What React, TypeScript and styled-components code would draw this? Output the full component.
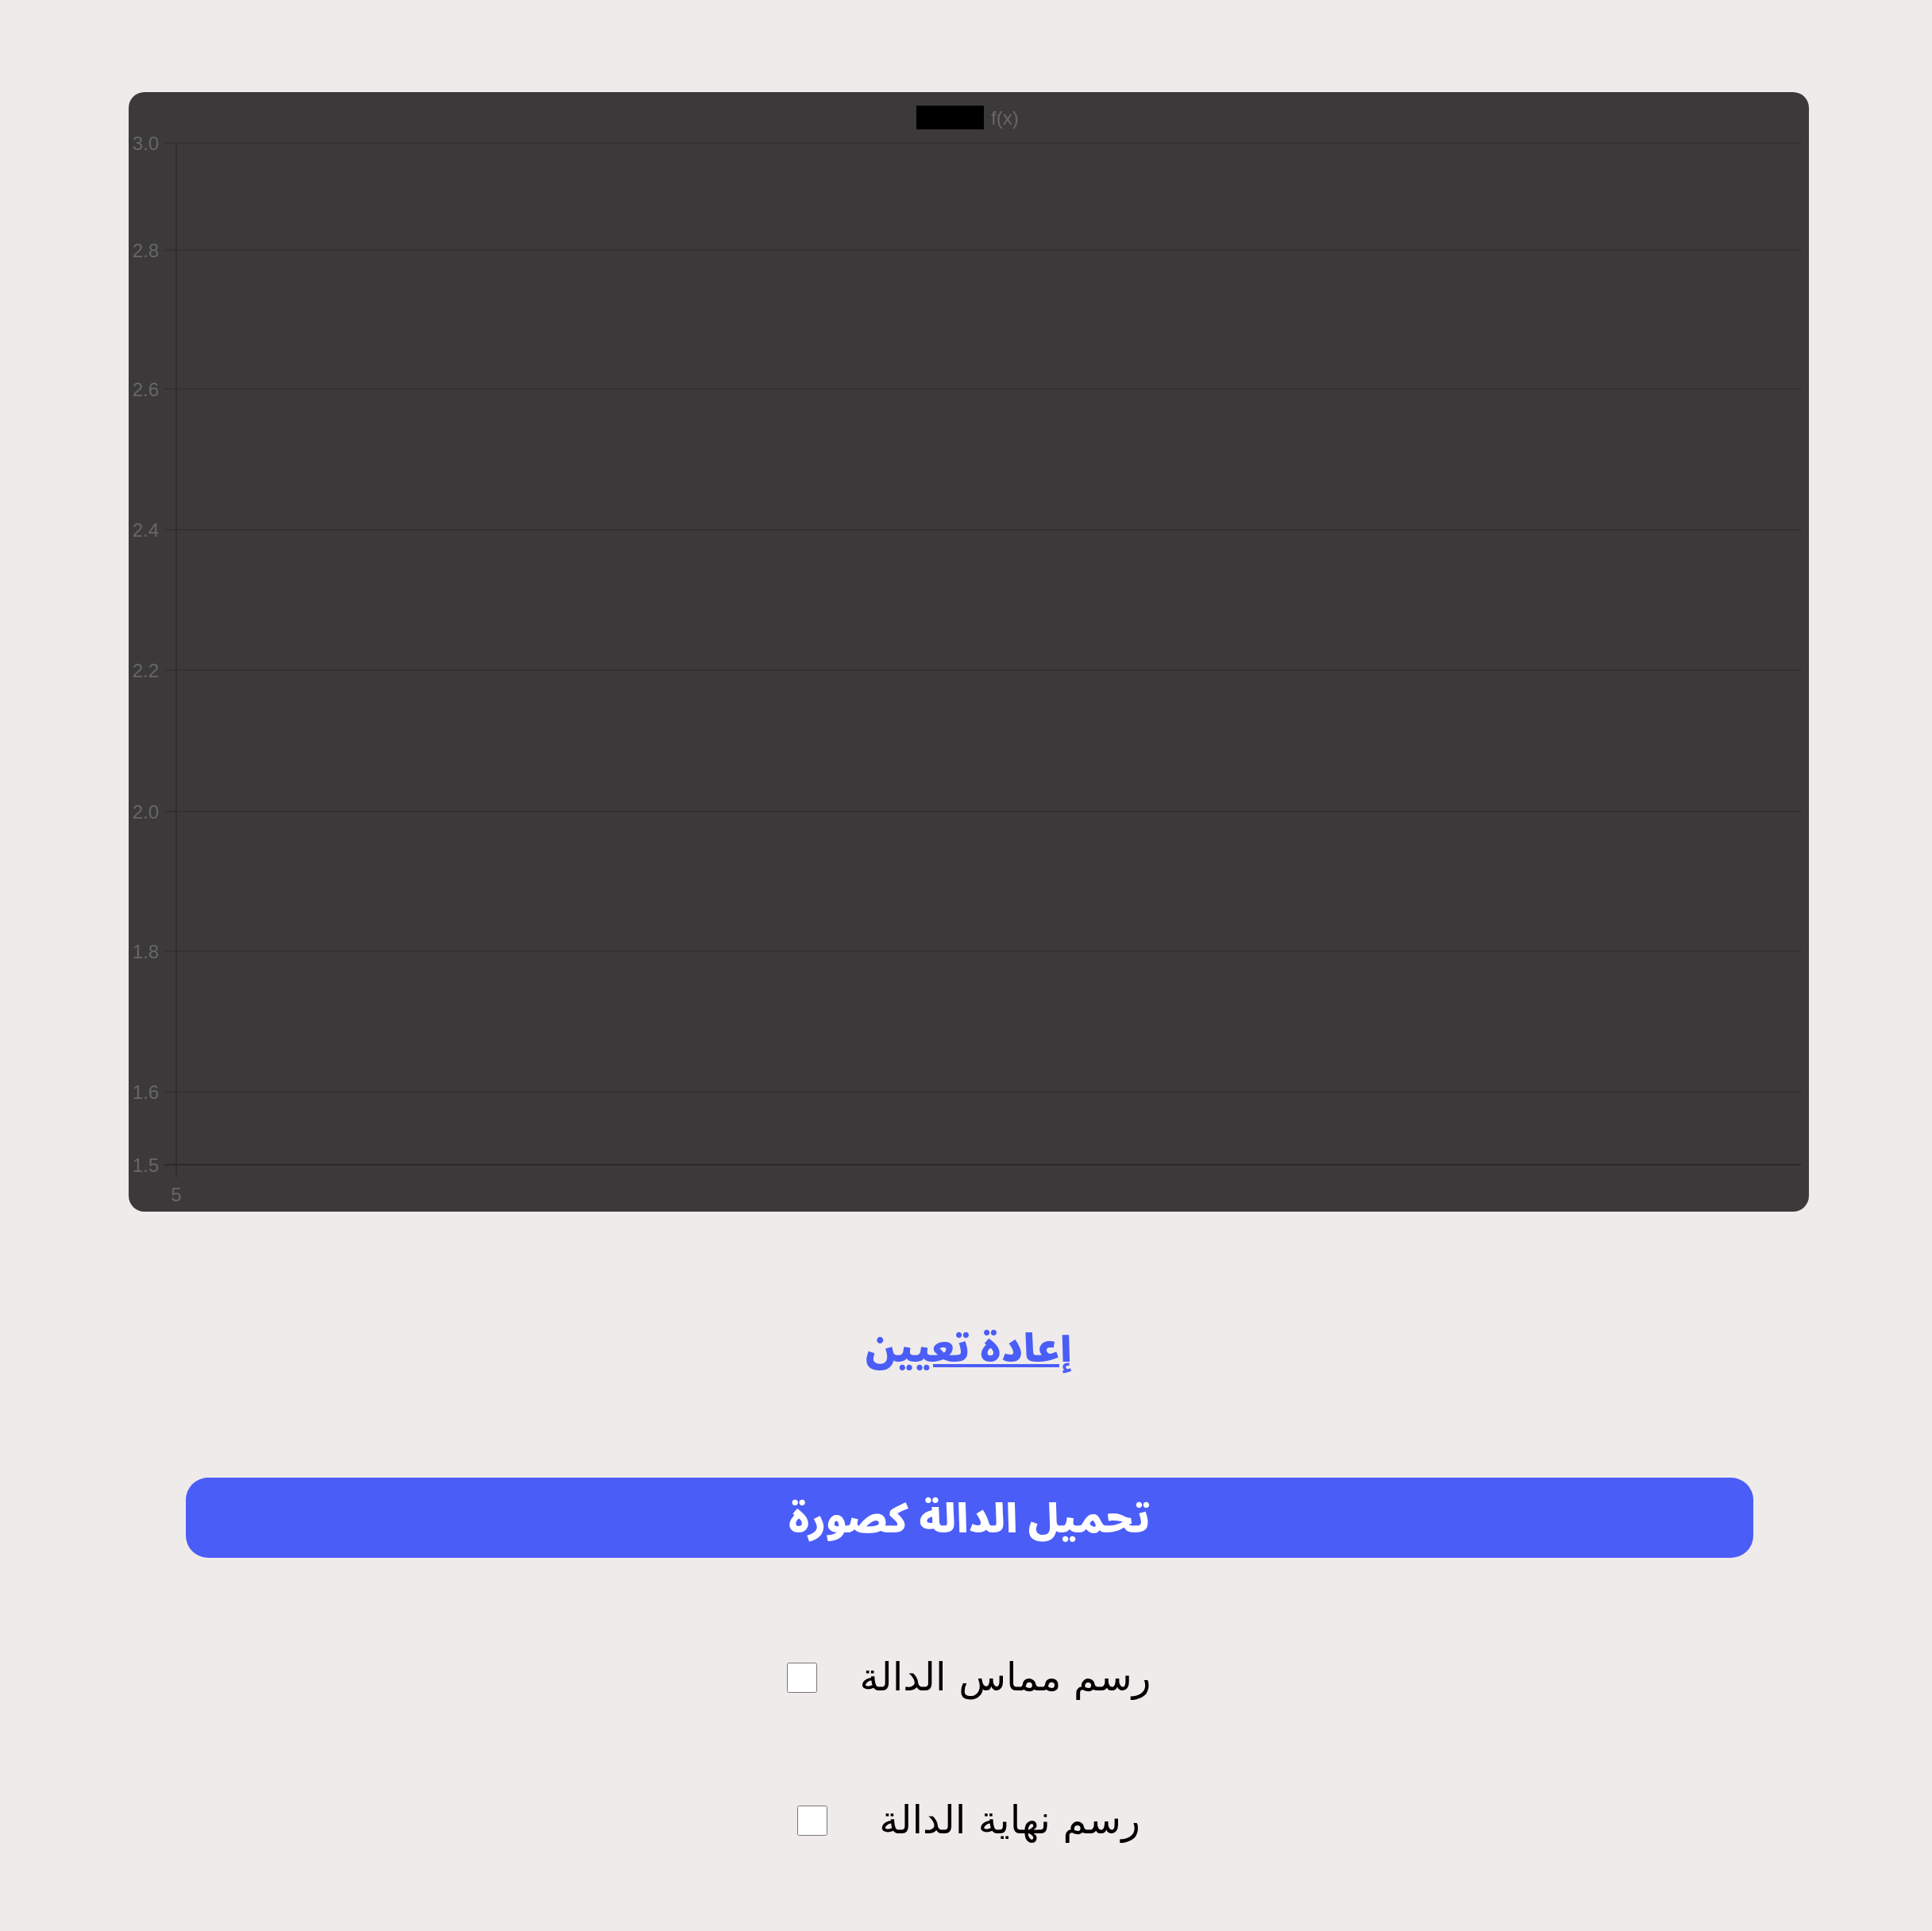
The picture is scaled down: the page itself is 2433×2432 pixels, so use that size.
import * as React from 'react';
import styled, { createGlobalStyle } from 'styled-components';

const GlobalStyle = createGlobalStyle`
	html, body {
		margin: 0;
		padding: 0;
		background: #efebea;
	}
	body {
		font-family: "DejaVu Sans", sans-serif;
	}
`;

const Page = styled.div`
	width: 2433px;
	min-height: 2432px;
	padding-top: 116px;
	box-sizing: border-box;
`;

const Main = styled.main`
	width: 2116px;
	margin-left: 162px;
	display: flex;
	flex-direction: column;
	align-items: stretch;
`;

const ChartCard = styled.div`
	height: 1410px;
	border-radius: 20px;
	background: #3b393a;
	overflow: hidden;
`;

const ResetRow = styled.div`
	display: flex;
	justify-content: center;
	padding-top: 134px;
	direction: rtl;
`;

const ResetLink = styled.a`
	color: #4b5df7;
	font-family: "Noto Sans Arabic", "Noto Sans", sans-serif;
	font-weight: 900;
	font-size: 49px;
	line-height: 80px;
	text-decoration: underline;
	cursor: pointer;
`;

const DownloadButton = styled.button`
	margin: 121px 70px 0 72px;
	height: 101px;
	border: none;
	border-radius: 28px;
	background: #4b5df7;
	color: #fff;
	direction: rtl;
	font-family: "Noto Sans Arabic", "Noto Sans", sans-serif;
	font-weight: 900;
	font-size: 50px;
	line-height: 95px;
	padding: 6px 0 0;
	cursor: pointer;
`;

const Options = styled.div`
	display: flex;
	flex-direction: column;
	align-items: center;
	gap: 110px;
	padding-top: 116px;
`;

const OptionRow = styled.label<{ $gap: number }>`
	display: flex;
	flex-direction: row;
	align-items: center;
	gap: ${p => p.$gap}px;
	font-size: 49px;
	color: #000;
	line-height: 70px;
`;

const OptionText = styled.span`
	direction: rtl;
`;

const Check = styled.input`
	width: 38px;
	height: 38px;
	margin: 0;
`;

const gridLines = [
	{ y: 64, label: '3.0' },
	{ y: 199, label: '2.8' },
	{ y: 374, label: '2.6' },
	{ y: 551, label: '2.4' },
	{ y: 728, label: '2.2' },
	{ y: 906, label: '2.0' },
	{ y: 1082, label: '1.8' },
	{ y: 1259, label: '1.6' },
	{ y: 1351, label: '1.5' },
];

const Chart = () => (
	<svg width="2116" height="1410" viewBox="0 0 2116 1410" style={{ display: 'block' }}>
		{/* legend */}
		<rect x="992" y="17" width="85" height="30" fill="#000" />
		<text x="1086" y="41" fill="#666" fontSize="24" fontFamily="Liberation Sans, Arial, sans-serif">f(x)</text>
		{gridLines.map((g, i) => (
			<g key={g.label}>
				<line
					x1="45"
					x2="2106"
					y1={g.y}
					y2={g.y}
					stroke={i === gridLines.length - 1 ? '#2a2829' : '#333132'}
					strokeWidth="2"
				/>
				<text
					x="38"
					y={g.y + 8.5}
					textAnchor="end"
					fill="#666"
					fontSize="24"
					fontFamily="Liberation Sans, Arial, sans-serif"
				>
					{g.label}
				</text>
			</g>
		))}
		<line x1="60" x2="60" y1="64" y2="1367" stroke="#2f2d2e" strokeWidth="2" />
		<text x="60" y="1397" textAnchor="middle" fill="#666" fontSize="24" fontFamily="Liberation Sans, Arial, sans-serif">5</text>
	</svg>
);

export default function App() {
	return (
		<>
			<GlobalStyle />
			<Page>
				<Main>
					<ChartCard>
						<Chart />
					</ChartCard>
					<ResetRow>
						<ResetLink>إعادة تعيين</ResetLink>
					</ResetRow>
					<DownloadButton>تحميل الدالة كصورة</DownloadButton>
					<Options>
						<OptionRow $gap={54}>
							<Check type="checkbox" />
							<OptionText>رسم مماس الدالة</OptionText>
						</OptionRow>
						<OptionRow $gap={65}>
							<Check type="checkbox" />
							<OptionText>رسم نهاية الدالة</OptionText>
						</OptionRow>
					</Options>
				</Main>
			</Page>
		</>
	);
}
